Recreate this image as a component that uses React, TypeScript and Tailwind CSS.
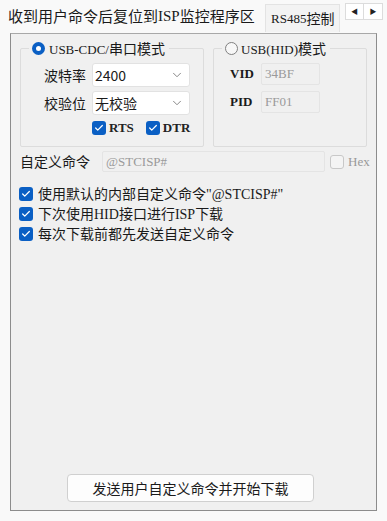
import { ChevronDown, Check } from "lucide-react";

const cjk = "font-['Microsoft_YaHei','Noto_Sans_CJK_SC',sans-serif]";
const mono = "font-['Liberation_Serif','Noto_Sans_CJK_SC',serif]";

function Box({ checked = true }: { checked?: boolean }) {
  return checked ? (
    <span className="grid size-[14px] shrink-0 place-items-center rounded-[3px] bg-[#0a5fc4]">
      <Check className="size-[10px] text-white" strokeWidth={3} />
    </span>
  ) : (
    <span className="block size-[14px] shrink-0 rounded-[3px] border border-[#c8c8c8] bg-[#f4f4f4]" />
  );
}

function Select({ value }: { value: string }) {
  return (
    <div className="flex h-[24px] w-[98px] items-center justify-between rounded-[3px] border border-[#e2e2e2] bg-white pl-[2px] pr-[5px]">
      <span className={`text-[14px] leading-none text-[#1a1a1a] ${cjk}`}>{value}</span>
      <ChevronDown className="size-[14px] text-[#777]" strokeWidth={1.5} />
    </div>
  );
}

export default function App() {
  return (
    <div className={`h-[521px] w-[387px] overflow-hidden bg-[#f9f9f9] text-[#1a1a1a] ${cjk}`}>
      <div className="flex h-[33px] items-end whitespace-nowrap">
        <div className="flex h-[33px] w-[265px] shrink-0 items-center pl-[8px] text-[15px]">
          收到用户命令后复位到<span className={mono}>ISP</span>监控程序区
        </div>
        <div className="mb-[1px] flex h-[28px] w-[75px] shrink-0 items-center border-l border-t border-r border-[#e3e3e3] bg-[#f3f3f3] pl-[5px] text-[14px]">
          <span className={`${mono} text-[13px]`}>RS485</span>控制
        </div>
        <div className="ml-[5px] mt-[3px] flex h-[17px] shrink-0 self-start">
          <span className="grid w-[19px] place-items-center border border-[#dcdcdc] bg-white text-[7px] text-[#222]">◀</span>
          <span className="grid w-[19px] place-items-center border border-l-0 border-[#dcdcdc] bg-white text-[7px] text-[#222]">▶</span>
        </div>
      </div>

      <div className="ml-[10px] flex h-[478px] w-[367px] flex-col border border-[#8c8c8c] border-t-[#a8a8a8] bg-[#f0f0f0]">
        <div className="mt-[6px] flex gap-[9px] pl-[9px]">
          <div className="relative mt-[8px] h-[99px] w-[184px] rounded-[2px] border border-[#dcdcdc]">
            <div className="absolute -top-[11px] left-[8px] flex items-center gap-[4px] whitespace-nowrap bg-[#f0f0f0] pl-[3px] pr-[4px]">
              <span className="grid size-[13px] place-items-center rounded-full bg-[#0a5fc4]">
                <span className="size-[5px] rounded-full bg-white" />
              </span>
              <span className="text-[14px]">
                <span className={`${mono} text-[13px]`}>USB-CDC/</span>串口模式
              </span>
            </div>
            <div className="mt-[14px] flex flex-col gap-[4px] pl-[23px]">
              <div className="flex items-center gap-[4px]">
                <span className="w-[44px] text-[14px]">波特率</span>
                <Select value="2400" />
              </div>
              <div className="flex items-center gap-[4px]">
                <span className="w-[44px] text-[14px]">校验位</span>
                <Select value="无校验" />
              </div>
              <div className={`-mt-[1px] flex items-center pl-[48px] text-[13px] ${mono}`}>
                <Box />
                <span className="ml-[3px] font-bold text-[#222]">RTS</span>
                <span className="ml-[12px] flex"><Box /></span>
                <span className="ml-[3px] font-bold text-[#222]">DTR</span>
              </div>
            </div>
          </div>

          <div className="relative mt-[8px] h-[99px] w-[154px] rounded-[2px] border border-[#dcdcdc]">
            <div className="absolute -top-[11px] left-[8px] flex items-center gap-[3px] whitespace-nowrap bg-[#f0f0f0] pl-[3px] pr-[4px]">
              <span className="size-[13px] rounded-full border border-[#808080] bg-[#f7f7f7]" />
              <span className="text-[14px]">
                <span className={`${mono} text-[13px]`}>USB(HID)</span>模式
              </span>
            </div>
            <div className={`mt-[14px] flex flex-col gap-[6px] pl-[16px] text-[13px] ${mono}`}>
              <div className="flex items-center">
                <span className="w-[31px] font-bold">VID</span>
                <span className="flex h-[22px] w-[59px] items-center rounded-[2px] border border-[#e4e4e4] pl-[3px] text-[#9a9a9a]">34BF</span>
              </div>
              <div className="flex items-center">
                <span className="w-[31px] font-bold">PID</span>
                <span className="flex h-[22px] w-[59px] items-center rounded-[2px] border border-[#e4e4e4] pl-[3px] text-[#9a9a9a]">FF01</span>
              </div>
            </div>
          </div>
        </div>

        <div className="mt-[4px] flex items-center pl-[9px]">
          <span className="w-[82px] shrink-0 text-[14px]">自定义命令</span>
          <span className={`flex h-[21px] w-[223px] shrink-0 items-center rounded-[2px] border border-[#e4e4e4] pl-[3px] text-[13px] text-[#9a9a9a] ${mono}`}>
            @STCISP#
          </span>
          <span className="ml-[5px] flex"><Box checked={false} /></span>
          <span className={`ml-[4px] text-[13px] text-[#999] ${mono}`}>Hex</span>
        </div>

        <div className="mt-[14px] flex flex-col gap-[4px] pl-[8px] text-[14px] leading-[15px]">
          <div className="flex items-center gap-[5px]">
            <Box />
            <span>
              使用默认的内部自定义命令<span className={mono}>"@STCISP#"</span>
            </span>
          </div>
          <div className="flex items-center gap-[5px]">
            <Box />
            <span>
              下次使用<span className={mono}>HID</span>接口进行<span className={mono}>ISP</span>下载
            </span>
          </div>
          <div className="flex items-center gap-[5px]">
            <Box />
            <span>每次下载前都先发送自定义命令</span>
          </div>
        </div>

        <div className="mb-[8px] mt-auto flex justify-center pr-[6px]">
          <button
            type="button"
            className="h-[28px] w-[247px] rounded-[4px] border border-[#d0d0d0] bg-[#fdfdfd] text-[14px] text-[#1a1a1a]"
          >
            发送用户自定义命令并开始下载
          </button>
        </div>
      </div>
    </div>
  );
}
